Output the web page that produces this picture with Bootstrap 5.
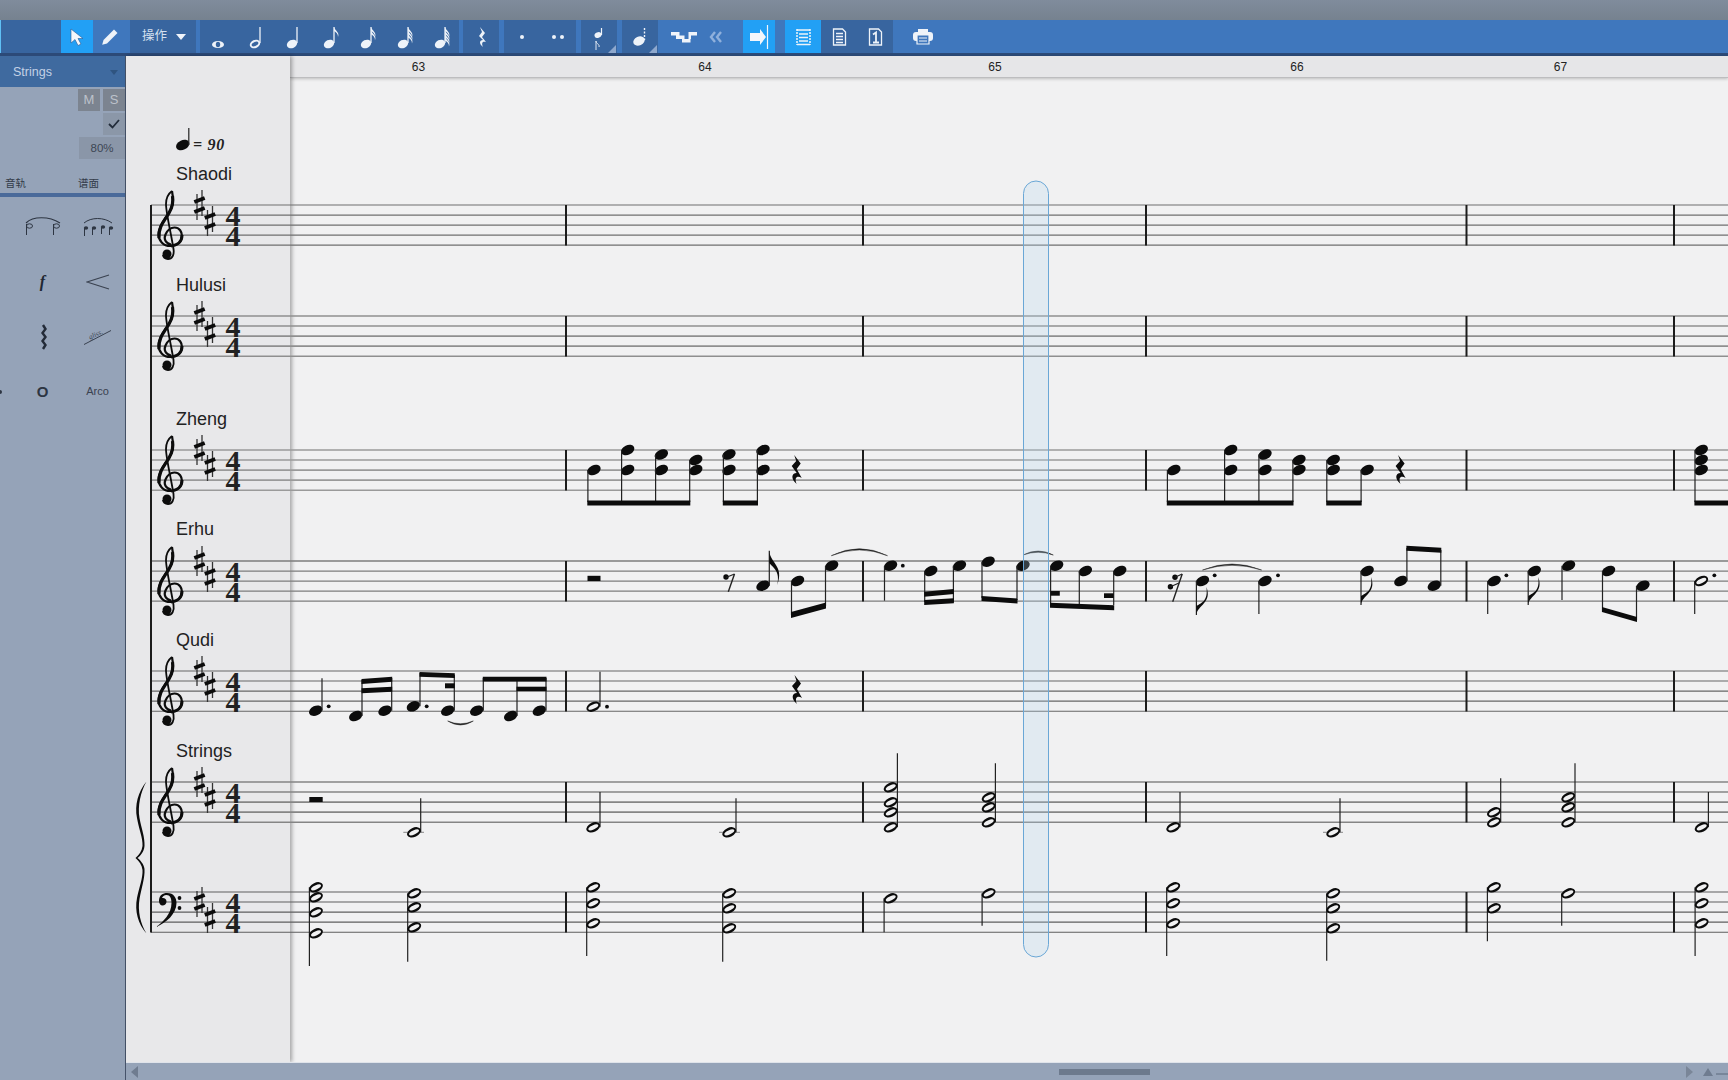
<!DOCTYPE html>
<html lang="zh">
<head>
<meta charset="UTF-8">
<title>Score editor</title>
<link href="https://cdn.jsdelivr.net/npm/bootstrap@5.3.0/dist/css/bootstrap.min.css" rel="stylesheet">
<style>
html, body { height: 100%; overflow: hidden; }
body { background: #95a3b8; font-family: "Liberation Sans", Arial, sans-serif; }
.app-frame { height: 1080px; width: 1728px; }
.title-strip { height: 20px; background: linear-gradient(#808c9c, #76828f); }
.tool-strip { height: 36px; background: #3f77bd; border-bottom: 3px solid #2c4a78; }
.tool-seg { height: 33px; background: #38659f; }
.tool-btn { width: 37px; height: 33px; }
.tool-btn svg { display: block; flex-shrink: 0; }
.is-on { background: #22a0f5; }
.seg-lead { width: 61px; background: #38659f; border-left: 1px solid #5fc0f5; }
.w-arrow { width: 32px; }
.w-pen { width: 34px; }
.seg-menu { width: 66px; margin-left: 3px; color: #d6e1f0; font-size: 12.5px; font-family: "Liberation Sans", "Noto Sans CJK SC", sans-serif; gap: 9px; padding-left: 12px; }
.gap-5px { margin-left: 4px; }
.seg-rest { width: 36px; }
.seg-dots { width: 72px; margin-left: 5px; }
.seg-dots .tool-btn { width: 36px; }
.seg-tie { width: 36px; margin-left: 5px; }
.seg-tie .tool-btn, .seg-rest .tool-btn { width: 36px; }
.w-tuplet { width: 46px; margin-left: 3px; }
.w-chev { width: 18px; }
.w-next { width: 32px; margin-left: 18px; }
.seg-pages { margin-left: 10px; }
.seg-pages .tool-btn { width: 36px; }
.w-print { margin-left: 11px; width: 37px; }
.side-panel { width: 126px; background: #95a3b8; border-right: 1px solid #46536a; }
.side-head { height: 31px; background: #3f6a9f; color: #c4d2e6; font-size: 12.5px; padding: 1px 7px 0 13px; }
.side-caret { width: 0; height: 0; border: 4px solid transparent; border-top: 5px solid #2f5480; border-bottom: 0; }
.tb-caret { border-width: 6px 5px 0; border-top-color: #f0f4fa; }
.mix-row { height: 24px; padding-top: 2px; gap: 3px; }
.mix-btn { width: 22px; height: 22px; background: #7c8490; color: #bcc2cb; font-size: 13px; }
.mix-check { background: #8b97a8; }
.mix-vol { width: 46px; height: 22px; background: #8a96a8; color: #3d4654; font-size: 11.5px; padding-top: 1px; }
.side-tabs { height: 38px; padding: 17px 5px 0; gap: 52px; border-bottom: 4px solid #4a6a9a; color: #333c4a; font-size: 10.5px; font-family: "Noto Sans CJK SC", sans-serif; line-height: 14px; }
.sym-grid { display: grid; grid-template-columns: 15px 55px 55px; grid-auto-rows: 55px; padding-top: 2px; color: #2d3542; }
.sym-cell { display: flex; align-items: center; justify-content: center; overflow: visible; }
.sym-f { font: italic bold 16px "Liberation Serif", serif; color: #1f2733; }
.sym-o { font: bold 15px "Liberation Sans", sans-serif; }
.sym-arco { font-size: 11px; color: #3a4250; }
.score-box { position: relative; min-width: 0; }
.label-pane { position: relative; z-index: 1; width: 164px; background: #e8e8ea; box-shadow: 2px 0 4px rgba(0,0,0,.32); }
.ruler-strip { position: relative; height: 22px; background: #e6e6e8; border-bottom: 1px solid #bdbdbf; box-shadow: 0 1px 3px rgba(0,0,0,.22); }
.paper { background: #f1f1f2; }
.score-svg { position: absolute; left: 0; top: 0; z-index: 2; }
.score-svg text { fill: #222; }
.scroll-strip { position: relative; z-index: 3; height: 18px; background: #95a3b8; border-top: 1px solid #dfe3ea; padding-left: 5px; }
.scroll-strip svg { flex-shrink: 0; }
.scroll-thumb { flex-shrink: 0; width: 91px; height: 6px; background: #6d7a8d; margin-left: 920px; }
.scroll-ends { margin-left: 535px; gap: 10px; }
</style>
</head>
<body>
<div class="app-frame d-flex flex-column">
  <div class="title-strip flex-shrink-0"></div>
  <div class="tool-strip d-flex flex-shrink-0">
    <div class="tool-seg seg-lead"></div>
    <div class="tool-btn w-arrow is-on d-flex align-items-center justify-content-center">
      <svg width="14" height="18" viewBox="0 0 14 18"><path d="M1 1v14l4-3.500 3 6 3-1.500-3-5.500h5z" fill="#f4f7fb" stroke="#2a5a96" stroke-width=".6"/></svg>
    </div>
    <div class="tool-btn w-pen d-flex align-items-center justify-content-center">
      <svg width="18" height="18" viewBox="0 0 18 18"><path d="M13 1.500l3.500 3.500L6 15.500l-4.800 1.300L2.500 12z" fill="#eef3f9"/></svg>
    </div>
    <div class="tool-seg seg-menu d-flex align-items-center"><span>操作</span><span class="side-caret tb-caret"></span></div>
    <div class="tool-seg gap-5px d-flex" id="noteTools"></div>
    <div class="tool-seg seg-rest gap-5px d-flex">
      <div class="tool-btn d-flex align-items-center justify-content-center">
        <svg width="12" height="22" viewBox="-6 -11 12 22"><path d="M-1-10l5 6-3 4 4 5c-3-1-5 0-3 5-4-3-4-7 0-7l-4-4 3-4z" fill="#eef3f9"/></svg>
      </div>
    </div>
    <div class="tool-seg seg-dots d-flex">
      <div class="tool-btn d-flex align-items-center justify-content-center"><svg width="8" height="8"><circle cx="4" cy="4" r="2" fill="#eef3f9"/></svg></div>
      <div class="tool-btn d-flex align-items-center justify-content-center"><svg width="14" height="8"><circle cx="3" cy="4" r="2" fill="#eef3f9"/><circle cx="11" cy="4" r="2" fill="#eef3f9"/></svg></div>
    </div>
    <div class="tool-seg seg-tie position-relative">
      <div class="tool-btn d-flex align-items-center justify-content-center">
        <svg width="36" height="33" viewBox="0 0 36 33"><ellipse cx="17" cy="15" rx="3.600" ry="2.800" fill="#eef3f9" transform="rotate(-25 17 15)"/><path d="M20.500 8v7" stroke="#eef3f9" stroke-width="1.200"/><path d="M15 21v9M15 21c0 3 4 3 3 6" stroke="#dfe7f2" stroke-width="1" fill="none"/><path d="M35 25v8h-8z" fill="#8ea8cd"/></svg>
      </div>
    </div>
    <div class="tool-seg seg-tie position-relative">
      <div class="tool-btn d-flex align-items-center justify-content-center">
        <svg width="36" height="33" viewBox="0 0 36 33"><ellipse cx="17" cy="21" rx="6" ry="4.400" fill="#eef3f9" transform="rotate(-25 17 21)"/><path d="M22.500 8v12" stroke="#eef3f9" stroke-width="1.400" stroke-dasharray="2 1.500"/><path d="M35 25v8h-8z" fill="#8ea8cd"/></svg>
      </div>
    </div>
    <div class="tool-btn w-tuplet d-flex align-items-center justify-content-center">
      <svg width="27" height="12" viewBox="0 0 27 12"><path d="M0 1h8.500v3.500H0zM5 4.500h8.500V8H5zM11 8h8.500v3.500H11zM17.500 1H26v3.500h-8.500zM17.500 4.500h2.500V8h-2.500z" fill="#f0f4fa"/></svg>
    </div>
    <div class="tool-btn w-chev d-flex align-items-center justify-content-center">
      <svg width="14" height="12" viewBox="0 0 14 12"><path d="M6 1L2 6l4 5M12 1L8 6l4 5" fill="none" stroke="#8fb0dc" stroke-width="2.400"/></svg>
    </div>
    <div class="tool-btn w-next is-on d-flex align-items-center justify-content-center">
      <svg width="20" height="26" viewBox="0 0 20 26"><path d="M1 9h10V5l6 8-6 8v-4H1z" fill="#f2f6fb"/><path d="M18.500 1v24" stroke="#f2f6fb" stroke-width="1.200"/></svg>
    </div>
    <div class="tool-seg seg-pages d-flex">
      <div class="tool-btn is-on d-flex align-items-center justify-content-center">
        <svg width="15" height="18" viewBox="0 0 15 18" fill="none" stroke="#eef3f9"><path d="M1 1v16M14 1v16" stroke-width="1.500" stroke-dasharray="2 1"/><path d="M1 2h13M3 6h9M3 9.500h9M3 13h9M1 16.500h13" stroke-width="1.300"/></svg>
      </div>
      <div class="tool-btn d-flex align-items-center justify-content-center">
        <svg width="15" height="18" viewBox="0 0 15 18" fill="none" stroke="#eef3f9" stroke-width="1.300"><path d="M1.500 1h9l3 3v13h-12z"/><path d="M4 5.500h7M4 8.500h7M4 11.500h7M4 14.500h7"/></svg>
      </div>
      <div class="tool-btn d-flex align-items-center justify-content-center">
        <svg width="15" height="18" viewBox="0 0 15 18" fill="none" stroke="#eef3f9" stroke-width="1.300"><path d="M1.500 1h9l3 3v13h-12z"/><path d="M5 6.500l3-2v10M5 14.500h6" stroke-width="1.800"/></svg>
      </div>
    </div>
    <div class="tool-btn w-print d-flex align-items-center justify-content-center">
      <svg width="22" height="16" viewBox="0 0 22 16"><path d="M6 0h10v4H6z" fill="#eef3f9"/><rect x="1" y="3" width="20" height="9" rx="3" fill="#eef3f9"/><path d="M5 6h12v9H5z" fill="#3f77bd" stroke="#eef3f9" stroke-width="1.200"/><path d="M7 9h8M7 12h8" stroke="#eef3f9"/></svg>
    </div>
  </div>

  <div class="d-flex flex-grow-1" style="min-height:0">
    <div class="side-panel flex-shrink-0 d-flex flex-column">
      <div class="side-head d-flex align-items-center justify-content-between"><span>Strings</span><span class="side-caret"></span></div>
      <div class="mix-row d-flex justify-content-end">
        <div class="mix-btn d-flex align-items-center justify-content-center">M</div>
        <div class="mix-btn d-flex align-items-center justify-content-center">S</div>
      </div>
      <div class="mix-row d-flex justify-content-end">
        <div class="mix-btn mix-check d-flex align-items-center justify-content-center">
          <svg width="12" height="10" viewBox="0 0 12 10"><path d="M1 5l3.500 3.500L11 1" fill="none" stroke="#222c3a" stroke-width="1.800"/></svg>
        </div>
      </div>
      <div class="mix-row d-flex justify-content-end">
        <div class="mix-vol d-flex align-items-center justify-content-center">80%</div>
      </div>
      <div class="side-tabs d-flex"><span>音轨</span><span>谱面</span></div>
      <div class="sym-grid">
        <div class="sym-cell"></div>
        <div class="sym-cell">
          <svg width="36" height="24" viewBox="0 0 36 24" fill="none" stroke="#2d3542"><path d="M1 8C8 1 24 1 35 8" stroke-width="1.100"/><path d="M1.500 9v11M28.500 9v11" /><ellipse cx="4.500" cy="11" rx="3" ry="2.200"/><ellipse cx="31.500" cy="11" rx="3" ry="2.200"/></svg>
        </div>
        <div class="sym-cell">
          <svg width="32" height="22" viewBox="0 0 32 22" fill="#2d3542"><path d="M2 7C9 1 22 1 30 7" fill="none" stroke="#2d3542"/><ellipse cx="4" cy="12" rx="2.200" ry="1.700"/><ellipse cx="12" cy="12" rx="2.200" ry="1.700"/><ellipse cx="21" cy="11" rx="2.200" ry="1.700"/><ellipse cx="29" cy="12" rx="2.200" ry="1.700"/><path d="M2.500 12v8M10.500 12v7M19.500 11v7M27.500 12v7" stroke="#2d3542"/></svg>
        </div>
        <div class="sym-cell"></div>
        <div class="sym-cell"><span class="sym-f">f</span></div>
        <div class="sym-cell">
          <svg width="24" height="16" viewBox="0 0 24 16"><path d="M23 1L1 8l22 7" fill="none" stroke="#3a4250" stroke-width="1.100"/></svg>
        </div>
        <div class="sym-cell"></div>
        <div class="sym-cell">
          <svg width="8" height="26" viewBox="0 0 8 26"><path d="M4 1l2.500 4-3 4 3 4-3 4 3 4-2.500 4" fill="none" stroke="#232b38" stroke-width="2.400"/></svg>
        </div>
        <div class="sym-cell">
          <svg width="30" height="18" viewBox="0 0 30 18"><path d="M1 16.500L28 2.500" stroke="#3a4250"/><text x="7" y="11.500" font-size="7" font-style="italic" font-family="Liberation Serif, serif" fill="#3a4250" transform="rotate(-25 7 11.500)">gliss.</text></svg>
        </div>
        <div class="sym-cell justify-content-start"><svg width="3" height="6" viewBox="0 0 3 6"><circle cx="0" cy="3" r="2" fill="#2d3542"/></svg></div>
        <div class="sym-cell"><span class="sym-o">O</span></div>
        <div class="sym-cell"><span class="sym-arco">Arco</span></div>
      </div>
    </div>

    <div class="score-box flex-grow-1 d-flex flex-column">
      <div class="d-flex flex-grow-1" style="min-height:0">
        <div class="label-pane flex-shrink-0"></div>
        <div class="flex-grow-1 d-flex flex-column">
          <div class="ruler-strip flex-shrink-0"></div>
          <div class="paper flex-grow-1"></div>
        </div>
      </div>
      <div class="scroll-strip flex-shrink-0 d-flex align-items-center">
        <svg width="8" height="12" viewBox="0 0 8 12"><path d="M7 0v12L0 6z" fill="#6f7c90"/></svg>
        <div class="scroll-thumb"></div>
        <div class="scroll-ends d-flex align-items-center">
          <svg width="8" height="12" viewBox="0 0 8 12"><path d="M1 0v12l7-6z" fill="#7a8698"/></svg>
          <svg width="25" height="10" viewBox="0 0 25 10"><path d="M0 9h10L5 1z" fill="#6f7c90"/><path d="M13 7h12" stroke="#6f7c90" stroke-width="1.500"/></svg>
        </div>
      </div>
      <svg id="score" class="score-svg" width="1602" height="1006" viewBox="126 56 1602 1006"></svg>
    </div>
  </div>
</div>

<script>
// toolbar notes: w whole, h half, number = quarter with n flags
const toolNotes = ['w', 'h', 0, 1, 2, 3, 4];
document.getElementById('noteTools').innerHTML = toolNotes.map(k => {
  let s = '';
  const c = '#eef3f9';
  if (k === 'w') {
    s = `<ellipse cx="18" cy="24.500" rx="6" ry="3.600" fill="${c}"/><ellipse cx="18" cy="24.500" rx="2.200" ry="2.800" fill="#38659f"/>`;
  } else {
    const hole = k === 'h' ? `<ellipse cx="18" cy="24" rx="3.600" ry="2" fill="#38659f" transform="rotate(-25 18 24)"/>` : '';
    s = `<ellipse cx="18" cy="24" rx="5.400" ry="4" fill="${c}" transform="rotate(-25 18 24)"/>${hole}<path d="M23 23V7" stroke="${c}" stroke-width="1.300"/>`;
    if (k !== 'h') {
      for (let i = 0; i < k; i++) {
        s += `<path d="M23 ${7 + i * 3.200}c1 4 6 5 4 10c.3-3-2-5-4-6z" fill="${c}"/>`;
      }
    }
  }
  return `<div class="tool-btn"><svg width="37" height="33" viewBox="0 0 37 33">${s}</svg></div>`;
}).join('');

// score canvas, coordinates are page pixels
const tops = [205, 316, 450, 561, 671, 782, 892];
const names = {205: 'Shaodi', 316: 'Hulusi', 450: 'Zheng', 561: 'Erhu', 671: 'Qudi', 782: 'Strings'};
const lineStyle = {205: ['#6f6f6f', 1.200], 316: ['#8f8f8f', 1.600], 450: ['#9a9a9a', 1.600], 561: ['#7d7d7d', 1.300], 671: ['#666', 1.100], 782: ['#858585', 1.600], 892: ['#5e5e5e', 1.100]};
const bars = [566, 863, 1146, 1466.500, 1674];
const ink = '#0c0c0c';
let out = '';

function line(x1, y1, x2, y2, w, c) { out += `<path d="M${x1} ${y1}L${x2} ${y2}" stroke="${c || '#222'}" stroke-width="${w || 1.200}"/>`; }
function beam(x1, y1, x2, y2, h) { out += `<path d="M${x1} ${y1}L${x2} ${y2}v${h || 5}L${x1} ${y1 + (h || 5)}z" fill="${ink}"/>`; }
function head(x, y) { out += `<ellipse cx="${x}" cy="${y}" rx="7" ry="4.800" fill="${ink}" transform="rotate(-25 ${x} ${y})"/>`; }
function hollow(x, y) {
  out += `<ellipse cx="${x}" cy="${y}" rx="7.300" ry="4.600" fill="${ink}" transform="rotate(-25 ${x} ${y})"/>`;
  out += `<ellipse cx="${x}" cy="${y}" rx="5.400" ry="2.100" fill="#f1f1f2" transform="rotate(-25 ${x} ${y})"/>`;
}
function dot(x, y) { out += `<circle cx="${x}" cy="${y}" r="1.900" fill="${ink}"/>`; }
function slur(x1, y1, x2, y2, h) {
  const mx = (x1 + x2) / 2;
  out += `<path d="M${x1} ${y1}Q${mx} ${y1 + h * 2} ${x2} ${y2}Q${mx} ${y1 + h * 2 + (h < 0 ? 2.500 : -2.500)} ${x1} ${y1}z" fill="#222" stroke="#222" stroke-width=".5"/>`;
}
// up: stem right of head, down: stem left of head
function chordDown(x, ys, stemX, end) { ys.forEach(y => head(x, y)); line(stemX, Math.min(...ys), stemX, end); }
function holDown(x, ys, end) { line(x - 6.600, Math.min(...ys), x - 6.600, end); ys.forEach(y => hollow(x, y)); }
function holUp(x, ys, top) { line(x + 6.700, Math.max(...ys), x + 6.700, top); ys.forEach(y => hollow(x, y)); }
function noteUp(x, y, stemX, top) { head(x, y); line(stemX, y, stemX, top); }
function noteDown(x, y, stemX, end) { head(x, y); line(stemX, y, stemX, end); }
function flagUp(sx, y0) { out += `<path d="M${sx} ${y0}C${sx + 1} ${y0 + 12} ${sx + 15} ${y0 + 15} ${sx + 8} ${y0 + 34}C${sx + 11} ${y0 + 20} ${sx + 4} ${y0 + 17} ${sx} ${y0 + 12}z" fill="${ink}"/>`; }
function flagDown(sx, yb) { out += `<path d="M${sx} ${yb}C${sx + 1} ${yb - 10} ${sx + 16} ${yb - 12} ${sx + 10} ${yb - 28}C${sx + 12} ${yb - 14} ${sx + 5} ${yb - 12} ${sx} ${yb - 9}z" fill="${ink}"/>`; }
function qRest(x, y) { out += `<path transform="translate(${x} ${y})" d="M-1.500-15L5-6.500 1-1 6 8C2 5-2 7 1 14-5 9-4.500 3 1 3L-4-4 .5-9z" fill="${ink}"/>`; }
function sharp(cx, cy) {
  line(cx - 2.500, cy - 11, cx - 2.500, cy + 15, 1.300, '#333');
  line(cx + 2.500, cy - 15, cx + 2.500, cy + 11, 1.300, '#333');
  line(cx - 5.200, cy - 3, cx + 5.200, cy - 7, 3.800, ink);
  line(cx - 5.200, cy + 7, cx + 5.200, cy + 3, 3.800, ink);
}
function trebleClef(y0) {
  out += `<g transform="translate(157 ${y0})" fill="none" stroke="${ink}">
    <path d="M14 39.500C8.500 38.500 6.500 34 8.500 29.500C10.500 25 14 22.500 17.500 22.500C22.500 22.500 25 27 25 31C25 37 20 41 13.500 41C6 41 1.500 35.500 1.500 29C1.500 20 8.500 14 12.500 7C15.500 2 17 -5 15 -14" stroke-width="2.200"/>
    <path d="M2 33C1 22 8 15 12 8C15 3 16.500 -3 15.500 -9" stroke-width="3.200"/>
    <path d="M15 -14C11 -11 9 -6 9 -1C9 8 14 28 16.500 44C17.500 50 15 54 11 54C8 54 6 52 6 50" stroke-width="1.800"/>
    <path d="M25 30C25 37 20 40.500 14 41" stroke-width="3"/>
    <circle cx="10" cy="49" r="4.500" fill="${ink}" stroke="none"/></g>`;
}
function bassClef(y0) {
  out += `<g transform="translate(156 ${y0})">
    <path d="M3 9C3 3 7 1 11 1C18 1 20.500 6 20.500 11C20.500 22 10 31 0 35C7 30 15.500 22 15.500 11C15.500 6 14 3 10.500 3C8 3 6.500 4.500 6 6C8.500 5.500 10.500 7 10.500 9.500C10.500 12 8.500 13.500 6.500 13.500C4.500 13.500 3 11.500 3 9z" fill="${ink}"/>
    <circle cx="23.500" cy="6" r="1.900" fill="${ink}"/><circle cx="23.500" cy="16" r="1.900" fill="${ink}"/></g>`;
}

// staves
tops.forEach(t => {
  const [c, w] = lineStyle[t];
  for (let i = 0; i < 5; i++) line(151, t + i * 10.050, 1728, t + i * 10.050, w, c);
  bars.forEach(b => line(b, t, b, t + 40.500, 2, '#1c1c1c'));
  if (t === 892) { bassClef(t); sharp(199.500, t + 10); sharp(210, t + 26); }
  else { trebleClef(t); sharp(199.500, t); sharp(210, t + 16); }
  out += `<text x="233" y="${t + 20.500}" text-anchor="middle" font-family="Liberation Serif, serif" font-weight="bold" font-size="30">4</text>`;
  out += `<text x="233" y="${t + 41}" text-anchor="middle" font-family="Liberation Serif, serif" font-weight="bold" font-size="30">4</text>`;
  if (names[t]) out += `<text x="176" y="${t - (t === 561 ? 26 : 25)}" font-size="18" font-family="Liberation Sans, sans-serif">${names[t]}</text>`;
});
line(151, 205, 151, 932.500, 2, '#1c1c1c');
out += `<path d="M146.500 781.500C138 792 134.500 805 137 818C139 830 143 838 142.500 846C142 851 139 855 135.500 858C139 861 142 865 142.500 870C143 878 139 888 137 898C134.500 911 138 924 146.500 933.500C140.500 924 137.500 911 139.500 899C141.500 888 145 878 144.500 869C144 864 140 860 137.500 858C140 856 144 852 144.500 846C145 837 141.500 829 139.500 818C137.500 806 140.500 792 146.500 781.500z" fill="${ink}"/>`;

// ruler and tempo
[[63, 418.500], [64, 705], [65, 995], [66, 1297], [67, 1560.500]].forEach(([n, x]) => {
  out += `<text x="${x}" y="71" font-size="12" text-anchor="middle" font-family="Liberation Sans, sans-serif">${n}</text>`;
});
head(182.700, 145); line(188.800, 145, 188.800, 128);
out += `<text x="193" y="150" font-size="16" letter-spacing=".7" font-family="Liberation Serif, serif" font-weight="bold" font-style="italic">= 90</text>`;

// Zheng
[[594, [470], 587.900], [627.700, [450, 470], 621.600], [661.400, [454.500, 470], 655.600], [695.800, [460, 470], 689.700],
 [729, [454.500, 470], 723.400], [763, [450, 470], 757.400],
 [1173.900, [470], 1167.400], [1230.700, [450, 470], 1224.600], [1265, [454.500, 470], 1258.900], [1299, [460, 470], 1292.900],
 [1333.300, [460, 470], 1326.800], [1367.200, [470], 1361.100], [1701.300, [450, 460, 470], 1695]].forEach(([x, ys, s]) => chordDown(x, ys, s, 502));
beam(587.300, 500.500, 690.300, 500.500); beam(722.800, 500.500, 758, 500.500);
beam(1166.800, 500.500, 1293.500, 500.500); beam(1326.200, 500.500, 1361.700, 500.500); beam(1694.400, 500.500, 1728, 500.500);
qRest(795.700, 470); qRest(1399.600, 470);

// Erhu
out += `<rect x="587.500" y="575.800" width="13" height="5.200" fill="${ink}"/>`;
out += `<circle cx="726" cy="577" r="2.700" fill="${ink}"/>`;
line(734.500, 574, 728.300, 591.700, 1.400); line(734.500, 574, 726, 577.500, 1.200);
noteUp(763, 585.700, 769.300, 550.700); flagUp(769.300, 551);
noteDown(797.600, 581, 791.500, 615); noteDown(831.700, 565.700, 825.500, 606);
beam(791, 612, 826, 602.500, 6);
slur(831.300, 555.700, 887.500, 555.700, -7);
noteDown(890.600, 565.700, 884.500, 600.700); dot(902.800, 565.700);
noteDown(930.800, 571, 924.700, 602); noteDown(959.500, 565.700, 953.400, 602);
beam(924.200, 600, 953.900, 598.300); beam(924.200, 591.700, 953.900, 589);
noteDown(988.200, 561.700, 982, 598); noteDown(1023, 565.700, 1017, 600);
beam(981.500, 596, 1017.500, 598.500);
slur(1023, 555, 1053.300, 555, -4);
noteDown(1056.700, 565.700, 1050.600, 605); noteDown(1085.400, 571, 1079.300, 605); noteDown(1119.800, 571, 1113.700, 605);
beam(1050, 602.700, 1114.200, 605.300);
beam(1050.600, 591, 1059.800, 591, 4.700); beam(1104, 593.300, 1113.700, 593.300, 4.700);
out += `<circle cx="1175" cy="577.300" r="2.700" fill="${ink}"/><circle cx="1170.400" cy="586.700" r="2.700" fill="${ink}"/>`;
line(1182.200, 574, 1172.700, 601.700, 1.400); line(1182.200, 574, 1175, 577.300, 1.200); line(1179, 583, 1170.400, 586.700, 1.200);
noteDown(1202.500, 581, 1196.400, 615); flagDown(1196.400, 615); dot(1214.700, 575.300);
slur(1202.500, 570, 1261.600, 570, -6);
noteDown(1265, 581, 1258.900, 614); dot(1278, 575.300);
noteDown(1367.200, 571, 1361, 605); flagDown(1361, 605);
noteUp(1400.800, 581, 1406.900, 548); noteUp(1434.300, 585.700, 1440.800, 550);
beam(1406.400, 545.700, 1441.300, 547.700);
noteDown(1494.200, 581, 1487.700, 614); dot(1506.400, 575.300);
noteDown(1534.300, 571, 1528.200, 605); flagDown(1528.200, 605);
noteDown(1568.600, 565.700, 1562, 600);
noteDown(1608.600, 571, 1602.500, 612); noteDown(1643, 585.700, 1636.500, 620);
beam(1602, 607, 1637, 617);
holDown(1701.300, [581], 614); dot(1714.300, 575.300);

// Qudi
noteUp(315.700, 710.700, 322, 678.300); dot(328.700, 706.300);
noteUp(355.700, 716, 362, 680); noteUp(385, 710.700, 391.700, 678);
beam(361.500, 679, 392.200, 676.700); beam(361.500, 688.300, 392.200, 686.700);
noteUp(413.300, 706.300, 420, 673); dot(426.700, 706.300); noteUp(447.700, 710.700, 454.300, 675);
beam(419.500, 672, 454.800, 673.300, 4.700); beam(445, 683.300, 454.800, 683.300);
noteUp(476.700, 710.700, 483.300, 678); noteUp(510.700, 716, 517, 680); noteUp(539.300, 710.700, 546, 678);
beam(482.800, 676.700, 546.500, 676.700, 4.700); beam(516.500, 686.700, 546.500, 686.700, 4.300);
slur(447.700, 721, 473.300, 721, 4);
holUp(593.300, [706.700], 671.700); dot(607, 706.700);
qRest(796, 690);

// Strings treble
out += `<rect x="309.300" y="797" width="13.400" height="5" fill="${ink}"/>`;
line(403.300, 832.300, 424, 832.300, 1, '#888'); holUp(414, [832.300], 798.300);
holUp(593.300, [827.300], 792);
line(719, 832.300, 740, 832.300, 1, '#888'); holUp(729.300, [832.300], 798.300);
holUp(890.700, [787.300, 802.300, 812.300, 827.300], 753.300);
holUp(988.700, [797.300, 807.300, 822.300], 763.300);
holUp(1173.300, [827.300], 792);
line(1323, 832.300, 1343, 832.300, 1, '#888'); holUp(1333.300, [832.300], 798.300);
holUp(1494, [812.300, 822.300], 778.300);
holUp(1568.300, [797.300, 807.300, 822.300], 763.300);
holUp(1701.700, [827.300], 792);

// Strings bass
holDown(316, [887.300, 897.300, 912.300, 933.300], 966);
holDown(414.300, [893.300, 907.300, 927.300], 961.700);
holDown(593.300, [887.300, 903.300, 923.300], 956);
holDown(729.300, [893.300, 908.300, 928.300], 961.700);
holDown(890.700, [898.300], 932.300);
holDown(988.700, [893.300], 925.700);
holDown(1173.300, [887.300, 903.300, 923.300], 956);
holDown(1333.300, [893.300, 908.300, 928.300], 960.700);
holDown(1494, [887.300, 908.300], 941.300);
holDown(1568.300, [893.300], 925.700);
holDown(1701.700, [887.300, 903.300, 923.300], 956);

// playhead on top of the notes
out += `<rect x="1023.500" y="181" width="25" height="776" rx="12.500" fill="#b5d6ef" fill-opacity=".25" stroke="#6aa7d6"/>`;

document.getElementById('score').innerHTML = out;
</script>
<script src="https://cdn.jsdelivr.net/npm/bootstrap@5.3.0/dist/js/bootstrap.bundle.min.js"></script>
</body>
</html>
